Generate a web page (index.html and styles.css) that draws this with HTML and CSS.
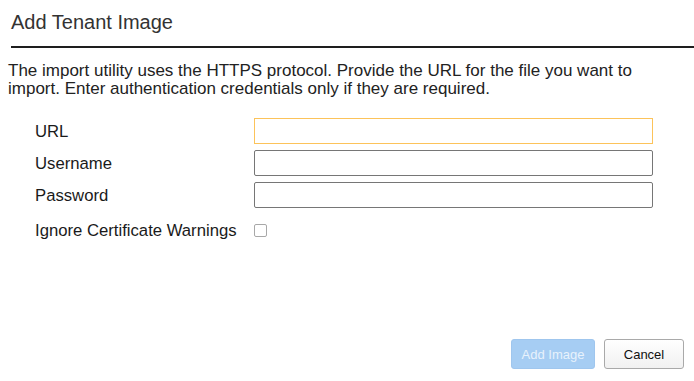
FILE: index.html
```html
<!DOCTYPE html>
<html lang="en">
<head>
    <meta charset="UTF-8">
    <title>Add Tenant Image</title>
    <link rel="stylesheet" href="styles.css">
</head>
<body>
    <div class="dialog">
        <header class="dialog-header">
            <h1>Add Tenant Image</h1>
        </header>

        <div class="dialog-body">
            <p class="intro">The import utility uses the HTTPS protocol. Provide the URL for the file you want to import. Enter authentication credentials only if they are required.</p>

            <form class="form">
                <label for="url">URL</label>
                <input type="text" id="url" class="field field-active">

                <label for="username">Username</label>
                <input type="text" id="username" class="field">

                <label for="password">Password</label>
                <input type="password" id="password" class="field">

                <label for="ignore" class="check-label">Ignore Certificate Warnings</label>
                <span class="check-cell"><input type="checkbox" id="ignore" class="check"></span>
            </form>
        </div>

        <footer class="dialog-footer">
            <button class="btn btn-primary" disabled>Add Image</button>
            <button class="btn">Cancel</button>
        </footer>
    </div>
</body>
</html>
```

FILE: styles.css
```css
* {
    margin: 0;
    padding: 0;
    box-sizing: border-box;
}

body {
    font-family: "Liberation Sans", Arial, sans-serif;
    background-color: #fff;
    color: #1a1a1a;
}

.dialog {
    width: 694px;
    height: 381px;
    display: flex;
    flex-direction: column;
}

.dialog-header {
    margin-left: 11px;
    padding-top: 10px;
    padding-bottom: 12px;
    border-bottom: 2px solid #1e1e1e;
}

.dialog-header h1 {
    font-size: 20px;
    font-weight: normal;
    line-height: 24px;
    color: #333;
}

.dialog-body {
    flex: 1;
    padding: 14px 8px 0 8px;
}

.intro {
    font-size: 17px;
    line-height: 18px;
    color: #222;
    width: 660px;
}

.form {
    display: grid;
    grid-template-columns: 219px 399px;
    row-gap: 6px;
    align-items: center;
    margin: 20px 0 0 27px;
    font-size: 16.7px;
}

.form label {
    line-height: 20px;
    padding-top: 2px;
}

.field {
    height: 26px;
    border: 1px solid #767676;
    border-radius: 2px;
    background: #fff;
}

.field-active {
    border-color: #fcc35a;
    border-radius: 0;
}

.check-label {
    margin-top: 5px;
}

.check-cell {
    margin-top: 5px;
    display: flex;
}

.check {
    appearance: none;
    width: 13px;
    height: 13px;
    border: 1px solid #a8a8a8;
    border-radius: 2px;
    background: #fff;
}

.dialog-footer {
    display: flex;
    justify-content: flex-end;
    gap: 9px;
    padding: 0 10px 12px 0;
}

.btn {
    height: 30px;
    width: 80px;
    font-family: "Liberation Sans", Arial, sans-serif;
    font-size: 13px;
    white-space: nowrap;
    color: #111;
    background: linear-gradient(#fff, #f1f1f1);
    border: 1px solid #a9a9a9;
    border-radius: 3px;
}

.btn-primary {
    width: 84px;
    color: #e8f2fc;
    background: #a6cdf3;
    border-color: #9fc6ee;
}
```
